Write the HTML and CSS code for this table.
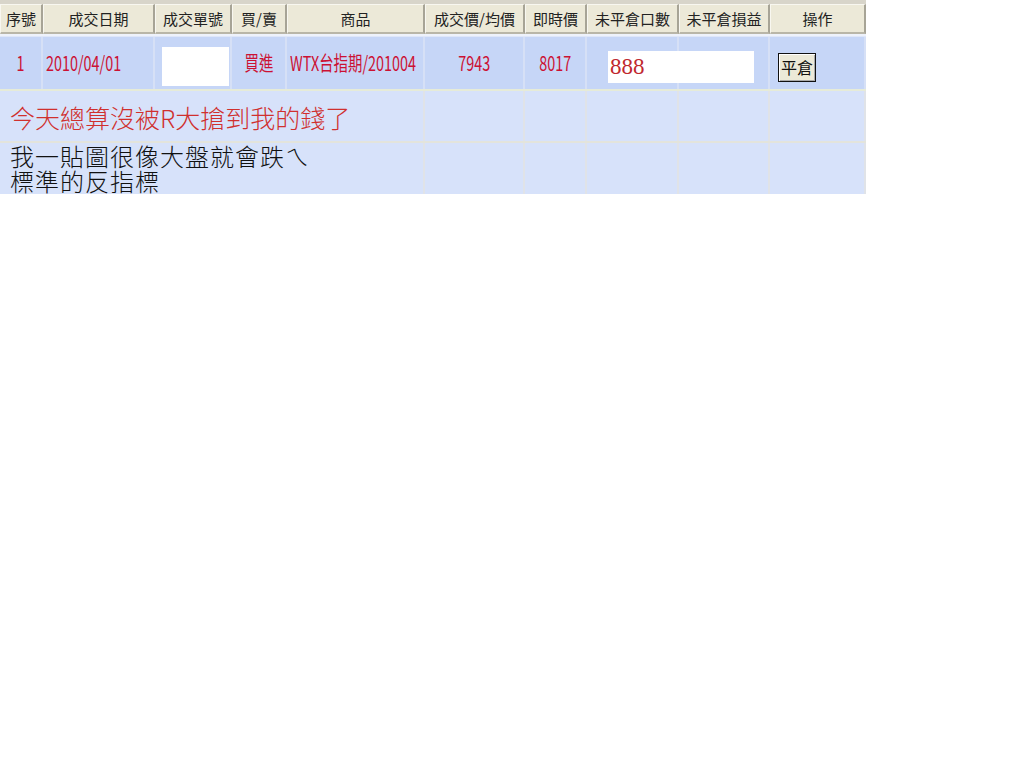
FILE: index.html
```html
<!DOCTYPE html>
<html lang="zh-Hant">
<head>
<meta charset="utf-8">
<title>未平倉</title>
<link rel="stylesheet" href="styles.css">
</head>
<body>
<div class="table">
  <div class="head">
    <div class="th">序號</div>
    <div class="th">成交日期</div>
    <div class="th">成交單號</div>
    <div class="th">買/賣</div>
    <div class="th">商品</div>
    <div class="th">成交價/均價</div>
    <div class="th">即時價</div>
    <div class="th">未平倉口數</div>
    <div class="th">未平倉損益</div>
    <div class="th">操作</div>
  </div>
  <div class="row trade">
    <div class="td center"><span class="nar c">1</span></div>
    <div class="td"><span class="nar">2010/04/01</span></div>
    <div class="td"><div class="box"></div></div>
    <div class="td center"><span class="nar c">買進</span></div>
    <div class="td"><span class="nar">WTX台指期/201004</span></div>
    <div class="td center"><span class="nar c">7943</span></div>
    <div class="td center"><span class="nar c">8017</span></div>
    <div class="td"><div class="qty">888</div></div>
    <div class="td"></div>
    <div class="td"><button class="btn">平倉</button></div>
  </div>
  <div class="row msg">
    <div class="td text red">今天總算沒被R大搶到我的錢了</div>
    <div class="td"></div><div class="td"></div><div class="td"></div><div class="td"></div><div class="td"></div>
  </div>
  <div class="row msg last">
    <div class="td text two"><div class="ln">我一貼圖很像大盤就會跌ㄟ</div><div class="ln">標準的反指標</div></div>
    <div class="td"></div><div class="td"></div><div class="td"></div><div class="td"></div><div class="td"></div>
  </div>
</div>
</body>
</html>
```

FILE: styles.css
```css
* { box-sizing: border-box; }
html, body { margin: 0; padding: 0; background: #ffffff; }
body { font-family: "Noto Sans CJK TC", "Noto Sans", sans-serif; }

.table { width: 866px; }

.head, .row {
  display: grid;
  grid-template-columns: 43px 112px 77px 55px 138px 100px 62px 92px 91px 96px;
}

.head {
  background: #d8d5ca;
  padding-top: 4px;
  border-bottom: 2px solid #eef2fb;
}
.th {
  height: 30px;
  background: #ece9d8;
  border-top: 1px solid #f8f7f0;
  border-left: 1px solid #f8f7f0;
  border-right: 2px solid #a7a496;
  border-bottom: 2px solid #b9b6a8;
  color: #222;
  font-size: 15px;
  line-height: 27px;
  text-align: center;
  white-space: nowrap;
  overflow: hidden;
}

.trade {
  height: 55px;
  background: #c6d6f7;
  border-top: 1px solid #dfe7f9;
  border-bottom: 2px solid #e6ebd8;
}
.trade .td {
  border-right: 2px solid #d6e0f6;
  display: flex;
  align-items: center;
  color: #cc1133;
  white-space: nowrap;
  overflow: visible;
  position: relative;
}
.trade .td.center { justify-content: center; }

.nar {
  display: inline-block;
  font-size: 20px;
  line-height: 22px;
  transform: scaleX(0.72);
  transform-origin: left center;
  margin-left: 3px;
}
.nar.c { transform-origin: center center; margin-left: 0; }

.box {
  flex-shrink: 0;
  width: 67px;
  height: 39px;
  background: #ffffff;
  margin-left: 7px;
  margin-top: 6px;
}

.qty {
  flex-shrink: 0;
  width: 146px;
  height: 32px;
  background: #ffffff;
  margin-left: 21px;
  margin-top: 8px;
  padding-left: 2px;
  font-family: "Liberation Serif", serif;
  font-size: 23px;
  line-height: 31px;
  color: #c0282e;
  position: relative;
  z-index: 1;
}

.btn {
  flex-shrink: 0;
  margin-left: 8px;
  margin-top: 8px;
  width: 38px;
  height: 29px;
  padding: 0;
  border: 1px solid #111;
  box-shadow: inset 1px 1px 0 #fff, inset -1px -1px 0 #aaa;
  background: #ece9d8;
  color: #111;
  font-family: "Noto Sans CJK TC", sans-serif;
  font-size: 16px;
  line-height: 26px;
}

.msg {
  height: 52px;
  background: #d7e2fa;
  border-bottom: 2px solid #e3e4dc;
}
.msg.last { height: 51px; border-bottom: 0; }
.msg .td {
  border-right: 2px solid #e0e3e8;
}
.msg .td.text {
  grid-column: 1 / span 5;
  font-family: "Noto Sans CJK TC", sans-serif;
  font-weight: 300;
  font-size: 24px;
  line-height: 25px;
  letter-spacing: 1px;
  color: #111;
  padding-left: 10px;
  padding-top: 0;
  white-space: nowrap;
}
.msg .td.text.red { color: #d0302e; padding-top: 14px; font-size: 25px; line-height: 25px; letter-spacing: 0; }
.ln { height: 25px; }
```
